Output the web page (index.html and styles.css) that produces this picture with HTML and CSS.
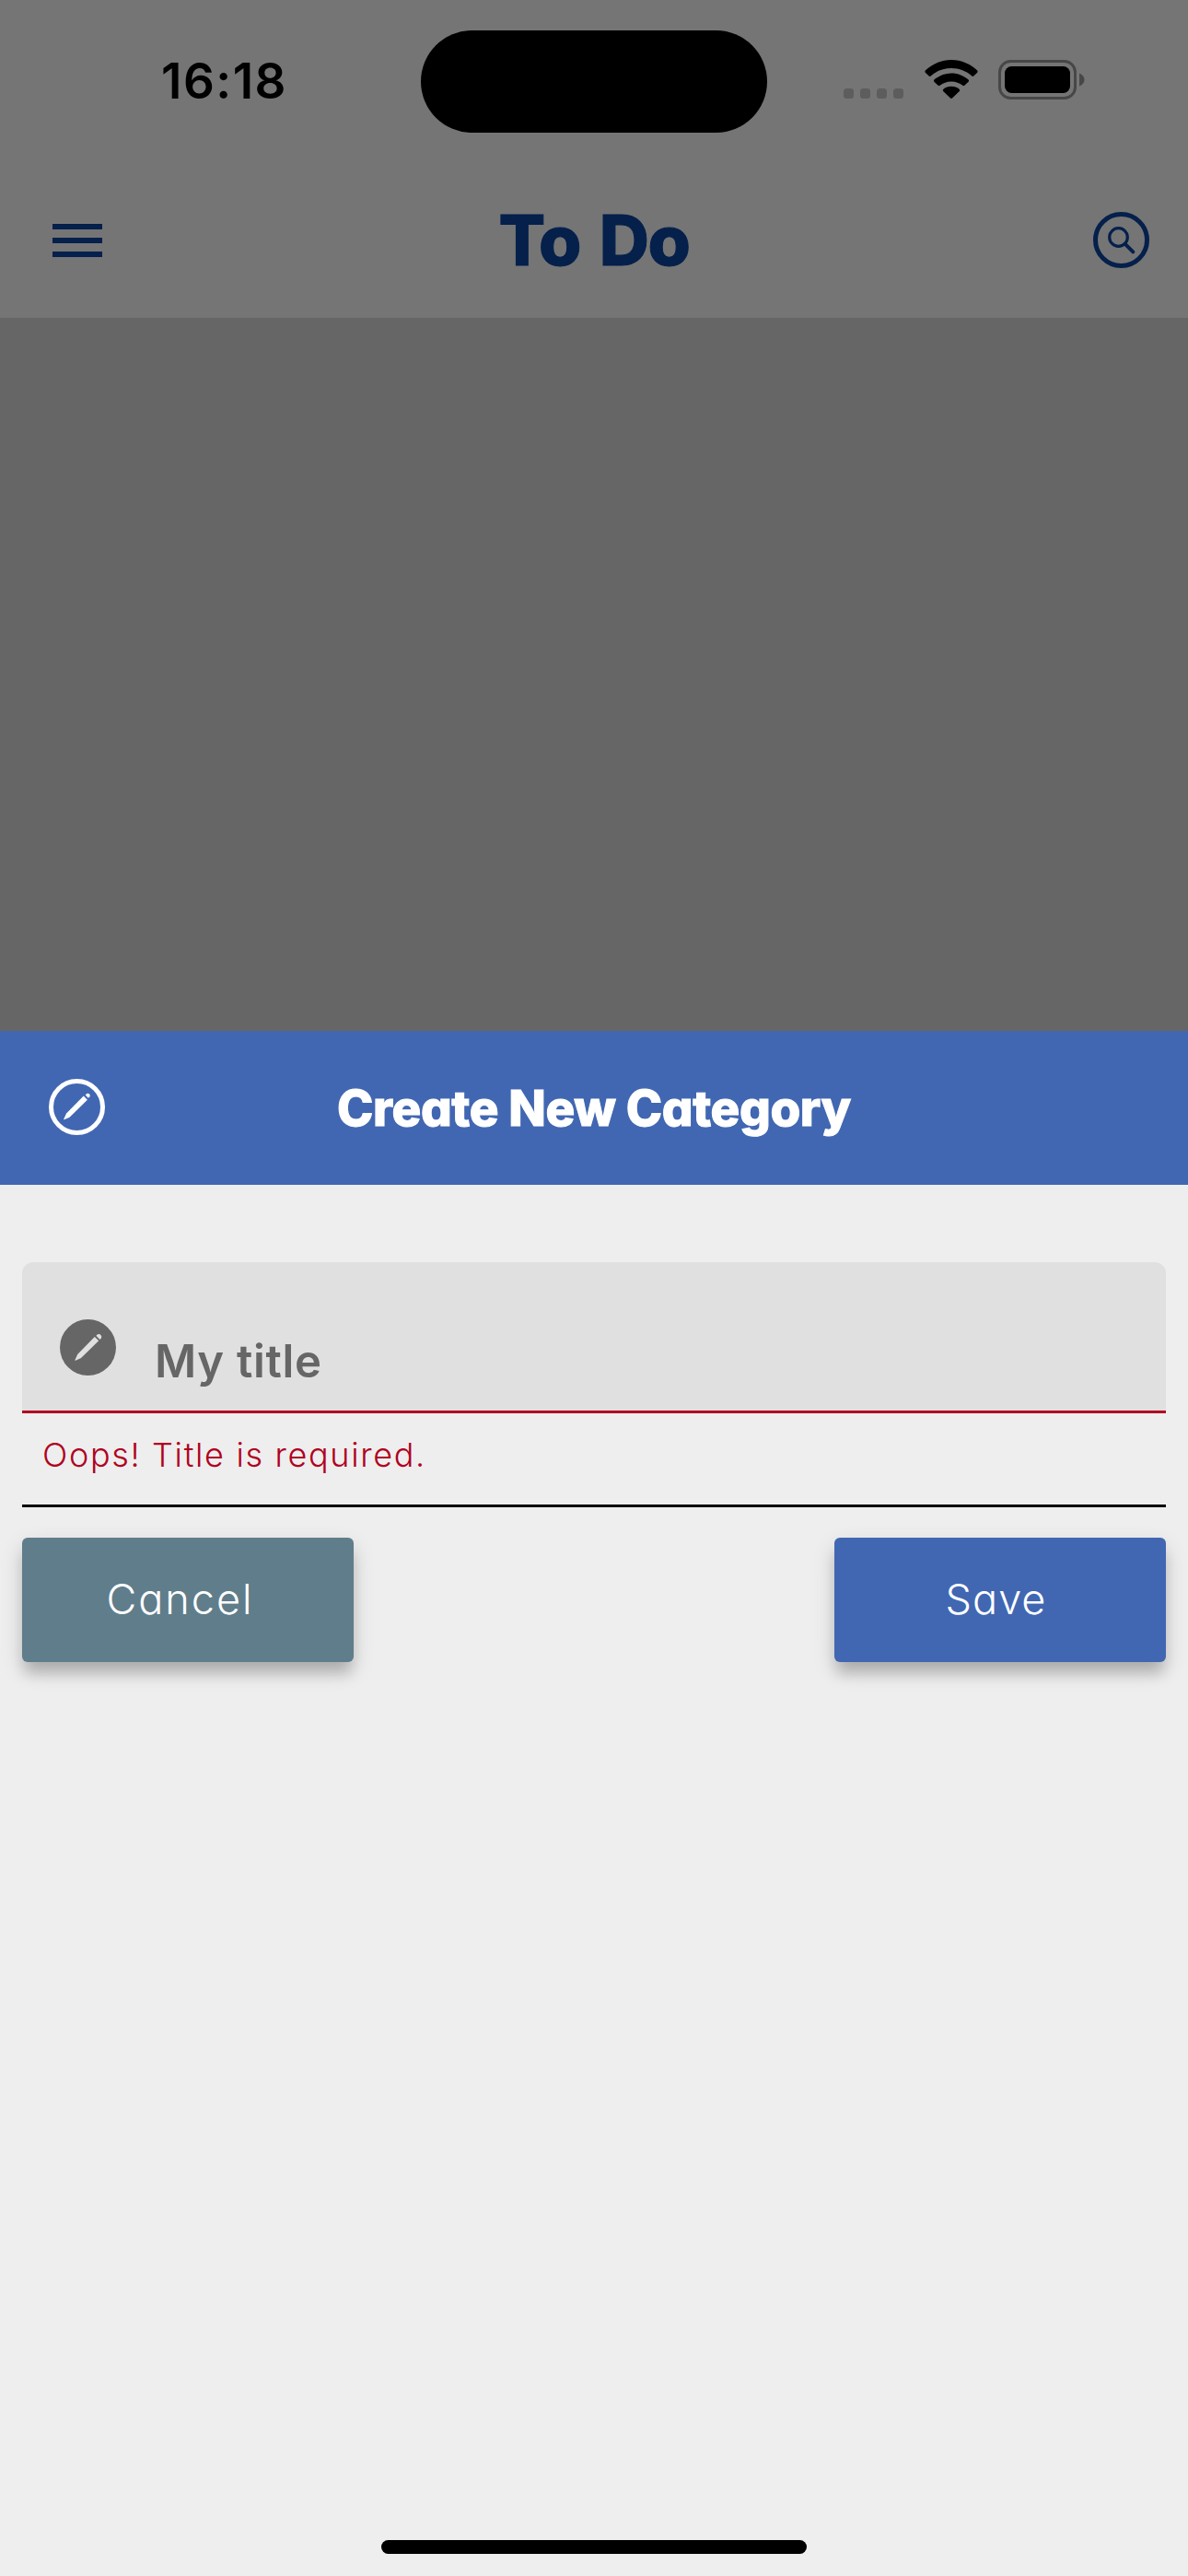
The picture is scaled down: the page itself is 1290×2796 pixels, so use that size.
FILE: index.html
```html
<!DOCTYPE html>
<html lang="en">
<head>
<meta charset="utf-8">
<title>To Do</title>
<link rel="stylesheet" href="styles.css">
</head>
<body>
<div class="screen">
  <div class="status-bar">
    <div class="clock-area"><span class="clock">16:18</span></div>
    <div class="island"></div>
    <div class="indicators">
      <svg class="cellular" width="65" height="43" viewBox="0 0 65 43"><rect x="0" y="31" width="11" height="11" rx="3.5"/><rect x="18" y="31" width="11" height="11" rx="3.5"/><rect x="36" y="31" width="11" height="11" rx="3.5"/><rect x="54" y="31" width="11" height="11" rx="3.5"/></svg>
      <svg class="wifi" width="58" height="43" viewBox="0 0 58 43"><path d="M29 0C18 0 8 4.500 .8 11.600Q0 12.700 .8 13.800L4.700 17.600Q5.700 18.400 6.700 17.500C12.700 12 20.500 9 29 9S45.300 12 51.300 17.500Q52.300 18.400 53.300 17.600L57.200 13.800Q58 12.700 57.200 11.600C50 4.500 40 0 29 0Z"/><path d="M29 14.400C21.800 14.400 15.300 17.100 10.400 21.600Q9.500 22.700 10.400 23.700L14.700 27.800Q15.600 28.600 16.600 27.800C20 25 24.200 23.400 29 23.400S38 25 41.400 27.800Q42.400 28.600 43.300 27.800L47.600 23.700Q48.500 22.700 47.600 21.600C42.700 17.100 36.200 14.400 29 14.400Z"/><path d="M29 28.800C25.600 28.800 22.500 30 20.200 32Q19.300 33.100 20.200 34L28 41.500Q29 42.400 30 41.500L37.800 34Q38.700 33.100 37.800 32C35.500 30 32.400 28.800 29 28.800Z"/></svg>
      <svg class="battery" width="95" height="43" viewBox="0 0 95 43"><rect x="1.500" y="1.500" width="82" height="40" rx="12" fill="none" stroke="#474747" stroke-width="3"/><rect x="7" y="7" width="71" height="29" rx="7.500"/><path d="M88 14.500Q93.500 17 93.500 21.500T88 28.500Z" fill="#474747"/></svg>
    </div>
  </div>
  <header class="app-bar">
    <svg class="menu" width="54" height="36" viewBox="0 0 54 36"><path d="M0 0H54V6H0ZM0 15H54V21H0ZM0 30H54V36H0Z"/></svg>
    <h1 class="app-title">To Do</h1>
    <svg class="search" width="61" height="61" viewBox="0 0 61 61"><circle cx="30.500" cy="30.500" r="28" stroke-width="5"/><circle cx="27.500" cy="27.500" r="9.800" stroke-width="3.200"/><path d="M34.800 34.800L43.300 43.300" stroke-width="4"/></svg>
  </header>
  <main class="backdrop"></main>
  <section class="sheet">
    <div class="sheet-header">
      <svg class="icon" width="61" height="61" viewBox="0 0 61 61"><circle cx="30.500" cy="30.500" r="28" fill="none" stroke="#fff" stroke-width="5"/><path d="M37.800 18.600L41.900 22.700 22.500 41.800 16.600 44.200Q16 44.100 16.300 43.400L19.100 37.400Z" fill="#fff"/><path d="M39.700 17.400L41.400 15.900Q42.700 15.300 44.100 16.600Q45.200 17.800 44.400 19.300L42.800 20.800Z" fill="#fff"/></svg>
      <h2 class="sheet-title">Create New Category</h2>
      <span class="header-end"></span>
    </div>
    <form class="form">
      <div class="field">
        <svg class="icon" width="61" height="61" viewBox="0 0 61 61"><circle cx="30.500" cy="30.500" r="30.500" fill="#666"/><path d="M37.800 19L42.200 23.300 23 41.900 17 44.800Q16.200 44.700 16.500 43.900L19.200 38Z" fill="#e0e0e0"/><path d="M39.300 17.700L41.100 16.200Q42.800 15.300 44.400 16.900Q46 18.600 44.900 20.200L43.500 21.900Z" fill="#e0e0e0"/></svg>
        <span class="field-label">My title</span>
      </div>
      <p class="error"><span>Oops! Title is required.</span></p>
      <div class="actions">
        <button class="btn cancel" type="button"><span>Cancel</span></button>
        <button class="btn save" type="button"><span>Save</span></button>
      </div>
    </form>
    <div class="home-indicator"></div>
  </section>
</div>
</body>
</html>
```
FILE: styles.css
```css
* { box-sizing: border-box; }
body { margin: 0; font-family: Inter, "Liberation Sans", sans-serif; font-feature-settings: "cv11"; }
h1, h2, p { margin: 0; }
svg { display: block; flex: none; }
span, h1, h2 { white-space: nowrap; }

.screen { width: 1290px; height: 2796px; display: flex; flex-direction: column; background: #666; overflow: hidden; }

.status-bar { height: 177px; flex: none; display: grid; grid-template-columns: 457px 376px 457px; background: #757575; }
.clock-area { padding: 56px 0 0 175px; }
.clock { display: block; font-size: 53px; line-height: 64px; font-weight: 600; letter-spacing: 1.500px; }
.island { height: 111px; margin-top: 33px; border-radius: 56px; background: #000; }
.indicators { display: flex; padding: 65px 0 0 83px; }
.cellular { fill: #5d5d5d; }
.wifi { margin-left: 23px; }
.battery { margin-left: 22px; }

.app-bar { height: 168px; flex: none; display: flex; align-items: center; justify-content: space-between; padding: 0 42px 1px 57px; background: #757575; color: #04204b; }
.menu { fill: currentColor; }
.app-title { margin-right: 8px; font-size: 75px; line-height: 90px; font-weight: 800; letter-spacing: -1.500px; word-spacing: 6px; -webkit-text-stroke: 1px currentColor; }
.search { fill: none; stroke: currentColor; stroke-linecap: round; }

.backdrop { flex: 1; }

.sheet { height: 1677.330px; flex: none; display: flex; flex-direction: column; background: #eee; }
.sheet-header { height: 167.670px; flex: none; display: flex; align-items: center; justify-content: space-between; padding: 0 53px 2px; background: #4167b2; color: #fff; }
.sheet-title { padding-top: 3px; font-size: 53px; line-height: 64px; font-weight: 800; letter-spacing: -.4px; -webkit-text-stroke: 1px #fff; }
.header-end { width: 61px; }

.form { padding: 83.670px 24px 0; flex: 1; }
.field { height: 164px; display: flex; align-items: flex-start; gap: 42px; padding: 62px 0 0 41px; border-radius: 12px 12px 0 0; border-bottom: 3px solid #b00020; background: #e0e0e0; }
.field-label { margin-top: 16px; font-size: 49px; line-height: 60px; font-weight: 600; letter-spacing: .7px; color: #666; }
.error { height: 102px; padding: 24px 0 0 22px; border-bottom: 3px solid #000; font-size: 36px; line-height: 42px; font-weight: 350; letter-spacing: 1.650px; color: #b00020; }
.actions { display: flex; justify-content: space-between; padding-top: 33px; }
.btn { width: 360px; height: 135px; padding: 0; border: 0; border-radius: 6px; font: 350 45px/54px Inter, "Liberation Sans", sans-serif; font-feature-settings: "cv11"; letter-spacing: 2px; color: #fff; box-shadow: 0 15px 15px -3px rgba(0, 0, 0, .18), 0 9px 24px rgba(0, 0, 0, .14); }
.cancel { padding-right: 17px; background: #607d8b; }
.save { padding-right: 9px; letter-spacing: 1px; background: #4167b2; }

.home-indicator { width: 462px; height: 15px; margin: 0 auto 24px; border-radius: 8px; background: #000; }
```
